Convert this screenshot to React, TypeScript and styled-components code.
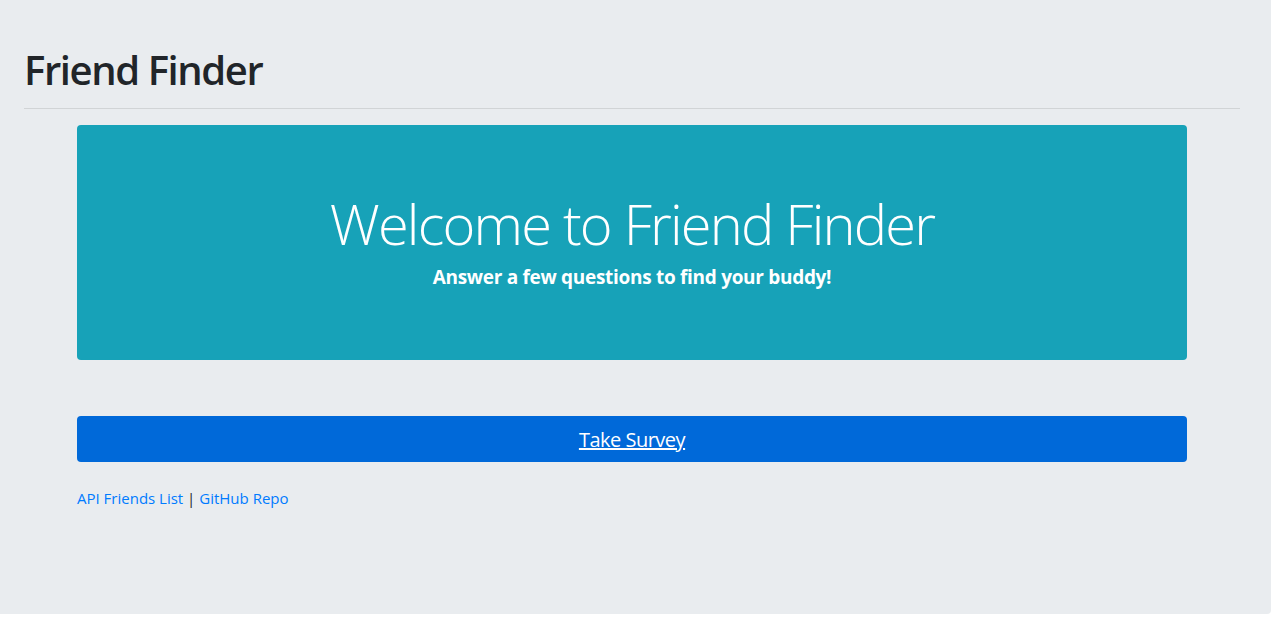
import styled, { createGlobalStyle } from "styled-components";

const GlobalStyle = createGlobalStyle`
    body {
        margin: 0;
        background: #ffffff;
        font-family: "Open Sans", "Noto Sans", "Liberation Sans", sans-serif;
        color: #212529;
    }
`;

const Jumbotron = styled.div`
    box-sizing: border-box;
    height: 614px;
    padding: 46px 31px 0 24px;
    background: #e9ecef;
    border-bottom-right-radius: 4px;
`;

const PageTitle = styled.h1`
    margin: 0;
    font-size: 40px;
    line-height: 48px;
    font-weight: 600;
    letter-spacing: -1.4px;
    color: #212529;
`;

const Rule = styled.hr`
    margin: 14px 0 0;
    border: 0;
    border-top: 1px solid rgba(0, 0, 0, 0.1);
`;

const Container = styled.div`
    width: 1110px;
    margin: 16px 0 0 53px;
`;

const Hero = styled.div`
    box-sizing: border-box;
    height: 235px;
    padding-top: 65px;
    background: #17a2b8;
    border-radius: 4px;
    color: #ffffff;
    text-align: center;
`;

const HeroTitle = styled.h2`
    margin: 0;
    font-size: 56px;
    line-height: 67px;
    font-weight: 300;
    letter-spacing: -1.8px;
`;

const Lead = styled.p`
    margin: 5px 0 0;
    font-size: 19px;
    line-height: 30px;
    font-weight: 700;
    letter-spacing: -0.3px;
`;

const SurveyButton = styled.a`
    display: flex;
    align-items: center;
    justify-content: center;
    height: 46px;
    margin-top: 56px;
    background: #0069d9;
    border-radius: 4px;
    color: #ffffff;
    font-size: 20px;
    text-decoration: underline;
    letter-spacing: -0.5px;
    cursor: pointer;
`;

const LinkRow = styled.div`
    margin-top: 24px;
    font-size: 15px;
    line-height: 24px;
    color: #212529;
`;

const TextLink = styled.a`
    color: #007bff;
    text-decoration: none;
`;

function App() {
    return (
        <>
            <GlobalStyle />
            <Jumbotron>
                <PageTitle>Friend Finder</PageTitle>
                <Rule />
                <Container>
                    <Hero>
                        <HeroTitle>Welcome to Friend Finder</HeroTitle>
                        <Lead>Answer a few questions to find your buddy!</Lead>
                    </Hero>
                    <SurveyButton>Take Survey</SurveyButton>
                    <LinkRow>
                        <TextLink>API Friends List</TextLink> | <TextLink>GitHub Repo</TextLink>
                    </LinkRow>
                </Container>
            </Jumbotron>
        </>
    );
}

export default App;
